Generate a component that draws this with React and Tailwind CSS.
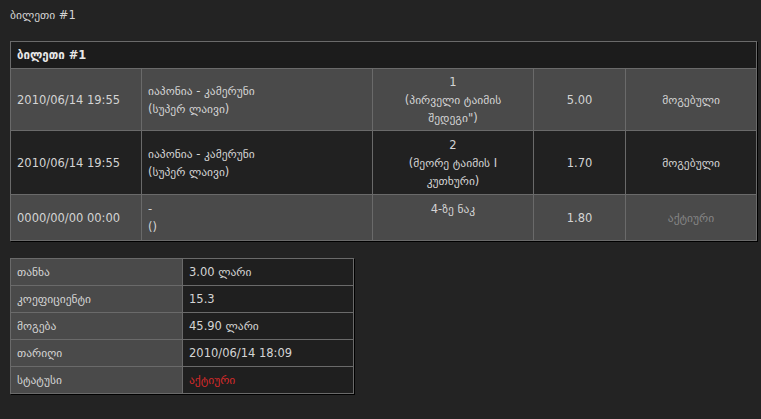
const rows = [
  {
    date: '2010/06/14 19:55',
    match: ['იაპონია - კამერუნი', '(სუპერ ლაივი)'],
    bet: ['1', '(პირველი ტაიმის', 'შედეგი")'],
    odd: '5.00',
    status: 'მოგებული',
    dim: false,
    bg: 'bg-[#4a4a4a]',
    h: 'h-[62px]',
  },
  {
    date: '2010/06/14 19:55',
    match: ['იაპონია - კამერუნი', '(სუპერ ლაივი)'],
    bet: ['2', '(მეორე ტაიმის I', 'კუთხური)'],
    odd: '1.70',
    status: 'მოგებული',
    dim: false,
    bg: 'bg-[#212121]',
    h: 'h-[64px]',
  },
  {
    date: '0000/00/00 00:00',
    match: ['-', '()'],
    bet: ['4-ზე ნაკ', '\u00a0'],
    odd: '1.80',
    status: 'აქტიური',
    dim: true,
    bg: 'bg-[#4a4a4a]',
    h: 'h-[46px]',
  },
];

const summary = [
  ['თანხა', '3.00 ლარი'],
  ['კოეფიციენტი', '15.3'],
  ['მოგება', '45.90 ლარი'],
  ['თარიღი', '2010/06/14 18:09'],
  ['სტატუსი', 'აქტიური', true],
];

const cell = 'border border-[#6a6a6a] px-[6px] py-0 align-middle';

export default function App() {
  return (
    <div
      className="min-h-[419px] bg-[#232323] px-[10px] pt-[6px] text-[11.5px] leading-[18px] text-[#d4d4d4]"
      style={{ fontFamily: '"DejaVu Sans", Verdana, sans-serif' }}
    >
      <div>ბილეთი #1</div>

      {/* ticket table */}
      <table className="mt-[17px] w-[746px] table-fixed border-collapse shadow-[1px_1px_0_#000]">
        <colgroup>
          <col className="w-[131px]" />
          <col className="w-[231px]" />
          <col className="w-[161px]" />
          <col className="w-[92px]" />
          <col className="w-[131px]" />
        </colgroup>
        <thead>
          <tr className="h-[27px] bg-[#1c1c1c]">
            <th colSpan={5} className={`${cell} text-left font-bold text-[#e8e8e8]`}>
              ბილეთი #1
            </th>
          </tr>
        </thead>
        <tbody>
          {rows.map((r, i) => (
            <tr key={i} className={`${r.bg} ${r.h}`}>
              <td className={cell}>{r.date}</td>
              <td className={cell}>
                {r.match.map((m, j) => (
                  <div key={j}>{m}</div>
                ))}
              </td>
              <td className={`${cell} text-center`}>
                {r.bet.map((b, j) => (
                  <div key={j}>{b}</div>
                ))}
              </td>
              <td className={`${cell} text-center`}>{r.odd}</td>
              <td className={`${cell} text-center ${r.dim ? 'text-[#858585]' : ''}`}>{r.status}</td>
            </tr>
          ))}
        </tbody>
      </table>

      {/* summary */}
      <table className="mt-[17px] w-[343px] table-fixed border-collapse shadow-[1px_1px_0_#000]">
        <colgroup>
          <col className="w-[172px]" />
          <col className="w-[171px]" />
        </colgroup>
        <tbody>
          {summary.map(([k, v, red]) => (
            <tr key={k} className="h-[27px]">
              <td className={`${cell} bg-[#4a4a4a]`}>{k}</td>
              <td className={`${cell} bg-[#1f1f1f] ${red ? 'text-[#d42a2a]' : ''}`}>{v}</td>
            </tr>
          ))}
        </tbody>
      </table>
    </div>
  );
}
